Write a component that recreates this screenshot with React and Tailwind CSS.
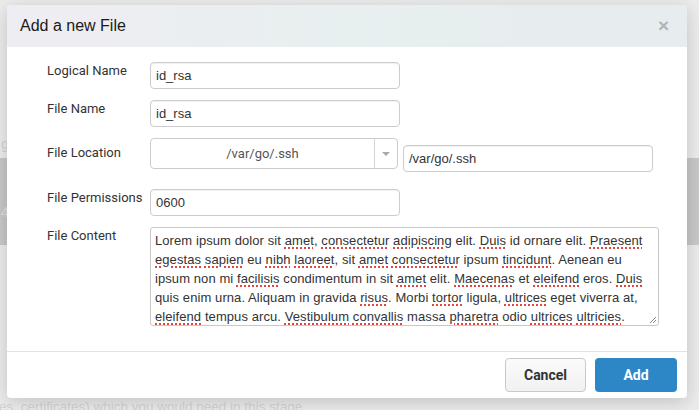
const lines = [
    "Lorem ipsum dolor sit *amet, *consectetur *adipiscing elit. *Duis id ornare elit. *Praesent",
    "*egestas *sapien eu *nibh *laoreet, sit *amet *consectetur ipsum *tincidunt. Aenean eu",
    "ipsum non mi *facilisis condimentum in sit *amet elit. *Maecenas et *eleifend eros. *Duis",
    "quis enim urna. Aliquam in gravida *risus. Morbi *tortor ligula, *ultrices eget viverra at,",
    "*eleifend tempus arcu. *Vestibulum *convallis massa *pharetra odio *ultrices *ultricies.",
    "Mauris blandit dignissim magna, vel imperdiet justo. Sed vel ultrices lorem. Donec sed",
];

// words starting with * get the red spell-check underline
const Line = ({ text }) => (
    <div className="whitespace-nowrap">
        {text.split(" ").map((w, i) => {
            const spaced = i > 0 ? " " : "";
            if (w.startsWith("*")) {
                const word = w.slice(1);
                const m = word.match(/^([A-Za-z]+)(.*)$/);
                return (
                    <span key={i}>
                        {spaced}
                        <span className="underline decoration-dotted decoration-[#e0463f] decoration-2 underline-offset-[2px]">
                            {m[1]}
                        </span>
                        {m[2]}
                    </span>
                );
            }
            return <span key={i}>{spaced + w}</span>;
        })}
    </div>
);

const Label = ({ children, className = "" }) => (
    <div className={`w-[103px] shrink-0 text-[13px] leading-[18px] text-[#333] font-['Roboto',sans-serif] ${className}`}>
        {children}
    </div>
);

const Input = ({ value, className = "" }) => (
    <div
        className={`h-[27px] rounded-[4px] border border-[#cccccc] bg-white px-[5px] flex items-center text-[13px] text-[#333] font-['Liberation_Sans',Arial,sans-serif] shadow-[inset_0_1px_1px_rgba(0,0,0,0.06)] ${className}`}
    >
        {value}
    </div>
);

export default function App() {
    return (
        <div className="relative w-[699px] h-[410px] overflow-hidden bg-[#ececec] font-['Liberation_Sans',Arial,sans-serif]">
            {/* page behind the overlay */}
            <div className="pt-[137px]">
                <div className="h-[14px] pl-[1px] text-[14px] leading-[14px] text-[#d2d2d2]">g</div>
                <div className="mt-[7px] h-[87px] bg-[#c8c8c8] pl-[1px] pt-[44px] text-[14px] text-[#e0e0e0]">4</div>
                <div className="mt-[153px] text-[13.5px] leading-[18px] text-[#d4d4d4] whitespace-nowrap -translate-x-[4px]">
                    ies, certificates) which you would need in this stage
                </div>
            </div>

            {/* modal */}
            <div className="absolute left-[7px] top-[5px] w-[680px] rounded-[4px] bg-white shadow-[0_4px_18px_rgba(0,0,0,0.18)] overflow-hidden">
                <div className="h-[42px] flex items-center justify-between pl-[13px] pr-[18px] bg-gradient-to-r from-[#efedf3] via-[#e8efef] to-[#e7ecee]">
                    <div className="text-[16px] text-[#1a1a1a] font-['Liberation_Sans',Arial,sans-serif]">Add a new File</div>
                    <div className="text-[19px] font-bold leading-none text-[#b3b3b3] -mt-[2px]">×</div>
                </div>

                <div className="pl-[40px] pt-[15px] pb-[25px]">
                    <div className="flex items-start">
                        <Label>Logical Name</Label>
                        <Input value="id_rsa" className="w-[250px]" />
                    </div>
                    <div className="flex items-start mt-[11px]">
                        <Label>File Name</Label>
                        <Input value="id_rsa" className="w-[250px]" />
                    </div>
                    <div className="flex items-start mt-[11px]">
                        <Label className="mt-[6px]">File Location</Label>
                        <div className="w-[248px] h-[31px] rounded-[4px] border border-[#cccccc] bg-white flex">
                            <div className="flex-1 flex items-center justify-center text-[13px] text-[#555] font-['Roboto',sans-serif]">
                                /var/go/.ssh
                            </div>
                            <div className="w-[23px] border-l border-[#d5d5d5] flex items-center justify-center">
                                <div className="w-0 h-0 border-l-[4px] border-r-[4px] border-t-[4px] border-l-transparent border-r-transparent border-t-[#a8a8a8]" />
                            </div>
                        </div>
                        <Input value="/var/go/.ssh" className="w-[250px] ml-[5px] mt-[7px]" />
                    </div>
                    <div className="flex items-start mt-[17px]">
                        <Label>File Permissions</Label>
                        <Input value="0600" className="w-[250px]" />
                    </div>
                    <div className="flex items-start mt-[11px]">
                        <Label>File Content</Label>
                        <div className="relative w-[509px] h-[99px] overflow-hidden rounded-[3px] border border-[#c8c8c8] bg-white pl-[4px] pt-[3px] text-[13px] leading-[19px] tracking-[0.08px] text-[#333] font-['Liberation_Sans',Arial,sans-serif]">
                            {lines.map((l, i) => (
                                <Line key={i} text={l} />
                            ))}
                            <svg className="absolute right-[1px] bottom-[1px]" width="9" height="9" viewBox="0 0 9 9">
                                <path d="M8 2 L2 8 M8 5 L5 8" stroke="#888" strokeWidth="1" />
                            </svg>
                        </div>
                    </div>
                </div>

                <div className="h-[47px] border-t border-[#e2e2e2] flex items-start justify-end gap-[9px] pt-[6px] pr-[10px] font-['Roboto',sans-serif]">
                    <button className="w-[81px] h-[34px] rounded-[4px] border border-[#c9c9c9] bg-gradient-to-b from-[#fbfbfb] to-[#f1f1f1] text-[14px] font-bold text-[#333]">
                        Cancel
                    </button>
                    <button className="w-[82px] h-[34px] rounded-[4px] bg-[#2d87c6] text-[14px] font-bold text-white">
                        Add
                    </button>
                </div>
            </div>
        </div>
    );
}
